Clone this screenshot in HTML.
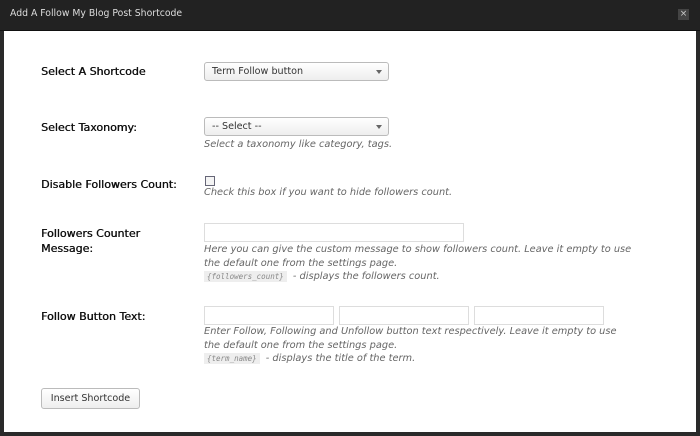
<!DOCTYPE html>
<html><head><style>
*{box-sizing:border-box;margin:0;padding:0}
body{width:700px;height:436px;background:#2a2a2a;font-family:"DejaVu Sans",sans-serif;position:relative;overflow:hidden}
.bar{position:absolute;left:0;top:0;width:700px;height:31px;background:#222;border-bottom:1px solid #111}
.bar .t{position:absolute;left:10px;top:8px;color:#ddd;font-size:9.3px}
.bar .x{position:absolute;left:678px;top:9px;width:11px;height:11px;background:#444;color:#ccc;font-size:9px;line-height:11px;text-align:center}
.main{position:absolute;left:4px;top:31px;width:692px;height:401px;background:#fff}
.l{position:absolute;left:41px;font-size:11px;color:#111;line-height:15px;text-shadow:0.4px 0 0 #111}
.sel{position:absolute;width:185px;height:19px;border:1px solid #bbb;border-radius:3px;background:linear-gradient(#fff,#eee);font-size:9.6px;color:#333;padding:3px 7px}
.sel:after{content:"";position:absolute;right:6px;top:7px;border:3px solid transparent;border-top:4px solid #666}
.d{position:absolute;font-size:9.8px;font-style:italic;color:#666;line-height:13px}
.in{position:absolute;height:19px;border:1px solid #ddd}
code{font-family:"DejaVu Sans Mono",monospace;font-size:7.5px;background:#eee;color:#888;padding:1px 3px;margin-right:3px;font-style:italic}
.cb{position:absolute;left:205px;top:176px;width:10px;height:10px;border:1px solid #667;background:#f4f4f4}
.btn{position:absolute;left:41px;top:388px;width:99px;height:21px;border:1px solid #bbb;border-radius:3px;background:linear-gradient(#fff,#eee);font-size:9.6px;color:#333;text-align:center;line-height:19px}
</style></head><body>
<div class="bar"><span class="t">Add A Follow My Blog Post Shortcode</span><span class="x">×</span></div>
<div class="main"></div>
<div class="l" style="top:64px">Select A Shortcode</div>
<div class="sel" style="left:204px;top:62px">Term Follow button</div>
<div class="l" style="top:120px">Select Taxonomy:</div>
<div class="sel" style="left:204px;top:117px">-- Select --</div>
<div class="d" style="left:204px;top:138px">Select a taxonomy like category, tags.</div>
<div class="l" style="top:177px">Disable Followers Count:</div>
<div class="cb"></div>
<div class="d" style="left:204px;top:186px">Check this box if you want to hide followers count.</div>
<div class="l" style="top:226px">Followers Counter<br>Message:</div>
<div class="in" style="left:204px;top:223px;width:260px"></div>
<div class="d" style="left:204px;top:243px;width:445px;line-height:13.5px">Here you can give the custom message to show followers count. Leave it empty to use the default one from the settings page.<br><code>{followers_count}</code> - displays the followers count.</div>
<div class="l" style="top:309px">Follow Button Text:</div>
<div class="in" style="left:204px;top:306px;width:130px"></div>
<div class="in" style="left:339px;top:306px;width:130px"></div>
<div class="in" style="left:474px;top:306px;width:130px"></div>
<div class="d" style="left:204px;top:325px;width:430px;line-height:13.5px">Enter Follow, Following and Unfollow button text respectively. Leave it empty to use the default one from the settings page.<br><code>{term_name}</code> - displays the title of the term.</div>
<div class="btn">Insert Shortcode</div>
</body></html>
